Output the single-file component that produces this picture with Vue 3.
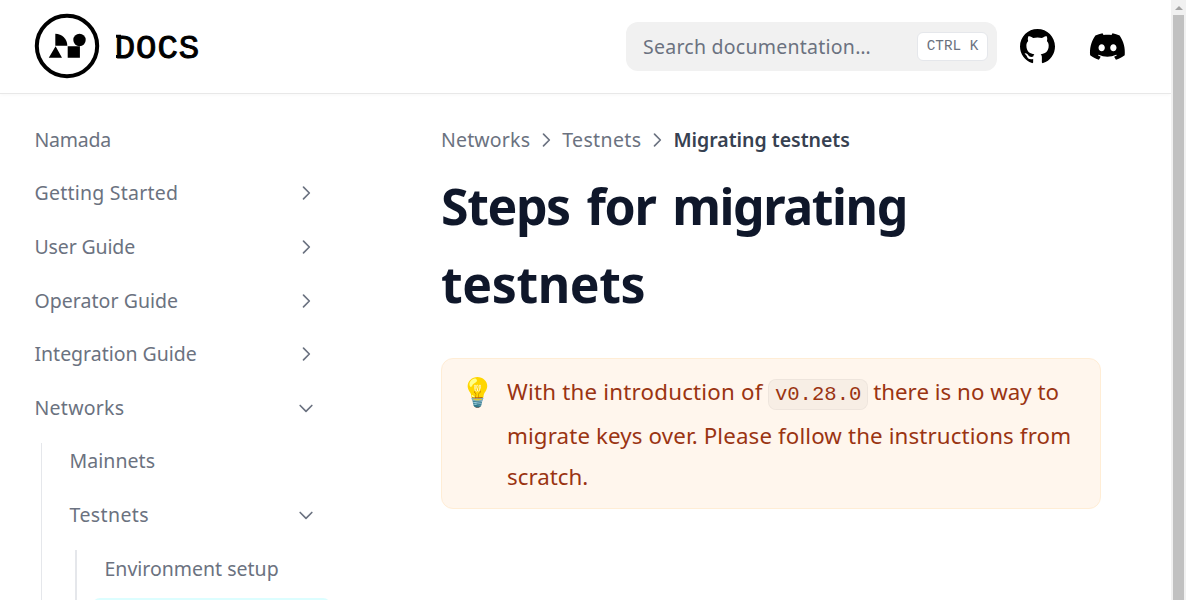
<script setup>
const items = [
  { label: 'Namada', spacing: -0.25 },
  { label: 'Getting Started', icon: 'right', spacing: 0.23 },
  { label: 'User Guide', icon: 'right', spacing: -0.14 },
  { label: 'Operator Guide', icon: 'right', spacing: 0.04 },
  { label: 'Integration Guide', icon: 'right', spacing: -0.02 },
  { label: 'Networks', icon: 'down', spacing: 0.26 },
]
const nested = [
  { label: 'Mainnets', spacing: 0.05 },
  { label: 'Testnets', icon: 'down', spacing: 0.4 },
]
</script>

<template>
  <div class="page">
    <div class="site">
      <header class="navbar">
        <a class="brand">
          <svg class="mark" width="66" height="66" viewBox="0 0 66 66">
            <circle cx="33" cy="33" r="30.2" fill="#fff" stroke="#000" stroke-width="4" />
            <path d="M21.3 20.7c6.8 0 12 5.2 12 12h-12z" />
            <circle cx="45.5" cy="27" r="6.2" />
            <path d="M21.6 33.2 28 44.8H14.8zM33.7 33.2h12.2v11.6H33.7z" />
          </svg>
          <svg class="word" width="88" height="34" viewBox="0 0 88 34">
            <text x="-.3" y="27.6" textLength="84.5">DOCS</text>
            <path d="M1 6.2h5M1 26.5h5" stroke="#000" stroke-width="2.9" />
          </svg>
        </a>
        <div class="search">
          <span class="placeholder">Search documentation…</span>
          <kbd>CTRL K</kbd>
        </div>
        <svg class="github" width="35" height="35" viewBox="0 0 16 16">
          <path d="M8 0C3.58 0 0 3.58 0 8c0 3.54 2.29 6.53 5.47 7.59.4.07.55-.17.55-.38 0-.19-.01-.82-.01-1.49-2.01.37-2.53-.49-2.69-.94-.09-.23-.48-.94-.82-1.13-.28-.15-.68-.52-.01-.53.63-.01 1.08.58 1.23.82.72 1.21 1.87.87 2.33.66.07-.52.28-.87.51-1.07-1.78-.2-3.64-.89-3.64-3.95 0-.87.31-1.59.82-2.15-.08-.2-.36-1.02.08-2.12 0 0 .67-.21 2.2.82.64-.18 1.32-.27 2-.27s1.36.09 2 .27c1.53-1.04 2.2-.82 2.2-.82.44 1.1.16 1.92.08 2.12.51.56.82 1.27.82 2.15 0 3.07-1.87 3.75-3.65 3.95.29.25.54.73.54 1.48 0 1.07-.01 1.93-.01 2.2 0 .21.15.46.55.38A8.01 8.01 0 0 0 16 8c0-4.42-3.58-8-8-8" />
        </svg>
        <svg class="discord" width="35" height="27" viewBox="0 5 71 55" preserveAspectRatio="none">
          <path d="M60.1 9.9C55.6 7.8 50.7 6.3 45.65 5.4L43.6 9.2C38.2 8.4 32.7 8.4 27.4 9.2L25.4 5.4C20.3 6.3 15.4 7.8 10.9 9.9C1.6 23.7-.9 37.1.3 50.4C6.4 54.9 12.2 57.6 18 59.3C19.4 57.4 20.6 55.3 21.7 53.2C19.7 52.4 17.8 51.5 16 50.4L17.5 49.3C29 54.7 41.5 54.7 53.2 49.3L54.7 50.4C52.9 51.5 51 52.4 49 53.2C50.1 55.3 51.3 57.4 52.7 59.3C58.5 57.6 64.3 54.9 70.4 50.4C71.9 35 67.9 21.7 60.1 9.9ZM23.7 42.4C20.2 42.4 17.3 39.2 17.3 35.2S20.1 28 23.7 28S30.1 31.3 30.1 35.2S27.3 42.4 23.7 42.4ZM47.4 42.4C43.9 42.4 41 39.2 41 35.2S43.8 28 47.4 28S53.8 31.3 53.8 35.2S51 42.4 47.4 42.4Z" />
        </svg>
      </header>

      <div class="columns">
        <nav class="sidebar">
          <div v-for="item in items" :key="item.label" class="row">
            <span :style="{ letterSpacing: item.spacing + 'px' }">{{ item.label }}</span>
            <svg v-if="item.icon" :class="['chevron', item.icon]" width="20" height="20" viewBox="0 0 24 24"><path d="m9 5 7 7-7 7" /></svg>
          </div>
          <div class="branch">
            <div v-for="item in nested" :key="item.label" class="row">
              <span :style="{ letterSpacing: item.spacing + 'px' }">{{ item.label }}</span>
              <svg v-if="item.icon" :class="['chevron', item.icon]" width="20" height="20" viewBox="0 0 24 24"><path d="m9 5 7 7-7 7" /></svg>
            </div>
            <div class="branch leaf">
              <div class="row"><span>Environment setup</span></div>
              <div class="row active"></div>
            </div>
          </div>
        </nav>

        <main>
          <div class="crumbs">
            <span class="first-crumb">Networks</span>
            <svg class="chevron" width="20" height="20" viewBox="0 0 24 24"><path d="m9 5 7 7-7 7" /></svg>
            <span class="second-crumb">Testnets</span>
            <svg class="chevron" width="20" height="20" viewBox="0 0 24 24"><path d="m9 5 7 7-7 7" /></svg>
            <span class="current">Migrating testnets</span>
          </div>
          <h1>Steps for migrating<br><span>testnets</span></h1>
          <div class="callout">
            <div class="bulb">💡</div>
            <div class="message">
              <div class="line first"><span class="a">With the introduction of</span><code>v0.28.0</code><span class="b">there is no way to</span></div>
              <div class="line"><span class="c">migrate keys over. Please follow the instructions from</span></div>
              <div class="line"><span class="d">scratch.</span></div>
            </div>
          </div>
        </main>
      </div>
    </div>
    <div class="scrollbar"><i class="arrow"></i><i class="thumb"></i></div>
  </div>
</template>

<style>
body { margin: 0; overflow: hidden; background: #fff; }
</style>

<style scoped>
* { box-sizing: border-box; }
.page { display: flex; width: 1186px; height: 600px; overflow: hidden; font-family: "Noto Sans", sans-serif; color: #6b7280; }
.site { width: 1171px; height: 600px; overflow: hidden; }
.navbar { display: flex; align-items: center; height: 93px; padding-left: 34px; box-shadow: 0 1px 0 #e8e8e8, 0 2px 4px rgba(0,0,0,.03); }
.brand { display: flex; align-items: center; width: 592px; }
.mark { flex: none; margin-top: -1px; }
.word { margin-left: 15px; font: 34px "Liberation Mono", monospace; overflow: visible; }
.word text { stroke: #000; stroke-width: 1px; }
.search { display: flex; align-items: center; justify-content: space-between; width: 371px; height: 49px; padding: 0 9px 0 17px; border-radius: 12px; background: #f1f1f1; font-size: 19.5px; white-space: nowrap; }
.placeholder { letter-spacing: .25px; }
kbd { height: 29px; width: 71px; border: 1px solid #e5e7eb; border-radius: 6px; background: #fff; font: 14.3px/26px "Liberation Mono", monospace; text-align: center; white-space: pre; }
.github { margin-left: 23px; }
.discord { margin-left: 35px; overflow: visible; }
.columns { display: flex; }
.sidebar { width: 328px; padding: 23px 0 0 35px; font-size: 19.5px; }
.row { display: flex; align-items: center; justify-content: space-between; height: 46.6px; margin-bottom: 7px; padding-right: 12px; white-space: nowrap; }
.row > span { margin-left: -.5px; }
.branch { display: flow-root; margin-top: 12px; margin-left: 6px; padding-left: 28px; border-left: 1px solid #e5e7eb; }
.branch > .row:first-child { margin-top: -5px; }
.branch.leaf { border-left-width: 2px; margin-left: 5px; padding-left: 28px; }
.active { margin-left: -13px; margin-right: -3px; border-radius: 8px; background: #dcfeff; }
.chevron { flex: none; fill: none; stroke: currentColor; stroke-width: 2; stroke-linecap: round; stroke-linejoin: round; }
.row .chevron { margin-top: 1px; }
.down { transform: rotate(90deg); }
main { width: 660px; margin-left: 113px; padding-top: 32px; }
.crumbs { display: flex; align-items: center; height: 28px; font-size: 19.5px; white-space: nowrap; }
.crumbs .chevron { margin: 2px 6px 0; }
.first-crumb { letter-spacing: .17px; }
.second-crumb { letter-spacing: .38px; }
.current { color: #374151; font-weight: 600; letter-spacing: -.02px; }
h1 { margin: 14px 0 0; color: #0f172a; font-size: 50px; line-height: 78px; font-weight: 700; letter-spacing: -1.4px; word-spacing: 5.2px; white-space: nowrap; }
h1 span { letter-spacing: -.4px; }
.callout { display: flex; height: 151px; margin-top: 35px; border: 1px solid #ffedd5; border-radius: 12px; background: #fff6ed; color: #9a3412; font-size: 22.3px; }
.bulb { width: 65px; padding: 12.5px 0 0 18px; font: 28px/41px "Noto Color Emoji", sans-serif; }
.message { padding-top: 11px; white-space: nowrap; }
.line { height: 41px; line-height: 41px; }
.line.first { display: flex; align-items: center; height: 45px; }
.a, .b { position: relative; top: -1.5px; }
.a { letter-spacing: .22px; }
.b { letter-spacing: .02px; }
.c { letter-spacing: .13px; }
code { width: 100px; height: 31px; margin: 3px 5px 0 5.5px; border: 1px solid rgba(0,0,0,.04); border-radius: 8px; background: rgba(0,0,0,.03); font: 20.6px/29px "Liberation Mono", monospace; text-align: center; }
.scrollbar { width: 15px; height: 600px; background: #f1f1f1; display: flex; flex-direction: column; align-items: center; }
.arrow { margin-top: 6px; border: 4px solid transparent; border-top: 0; border-bottom: 4px solid #a3a3a3; }
.thumb { width: 11px; margin-top: 5px; flex: 1; background: #c1c1c1; }
</style>
